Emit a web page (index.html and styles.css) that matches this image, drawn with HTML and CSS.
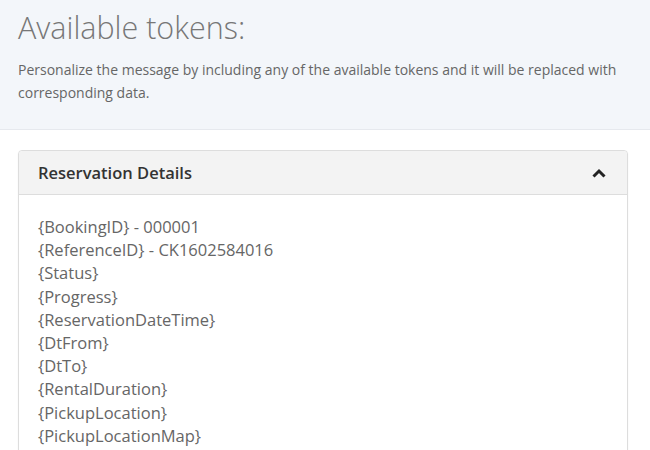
FILE: index.html
```html
<!DOCTYPE html>
<html lang="en">

<head>
  <meta charset="UTF-8" />
  <meta name="viewport" content="width=device-width, initial-scale=1.0" />
  <title>Available tokens</title>
  <link rel="stylesheet" href="styles.css">
</head>

<body>
  <div class="intro">
    <h1>Available tokens:</h1>
    <p>Personalize the message by including any of the available tokens and it will be replaced with corresponding data.</p>
  </div>

  <div class="content">
    <div class="panel">
      <div class="panel-heading">
        <h3>Reservation Details</h3>
        <svg class="chevron" width="16" height="12" viewBox="0 0 16 12">
          <path d="M2.5 9.5 L8 4 L13.5 9.5" fill="none" stroke="#222" stroke-width="3" />
        </svg>
      </div>
      <div class="panel-body">
        <div class="token">{BookingID} - 000001</div>
        <div class="token">{ReferenceID} - CK1602584016</div>
        <div class="token">{Status}</div>
        <div class="token">{Progress}</div>
        <div class="token">{ReservationDateTime}</div>
        <div class="token">{DtFrom}</div>
        <div class="token">{DtTo}</div>
        <div class="token">{RentalDuration}</div>
        <div class="token">{PickupLocation}</div>
        <div class="token">{PickupLocationMap}</div>
      </div>
    </div>
  </div>
</body>

</html>
```

FILE: styles.css
```css
body {
  margin: 0;
  font-family: "Open Sans", "Liberation Sans", sans-serif;
  background: #fff;
  color: #666;
}

.intro {
  background: #f3f6fa;
  border-bottom: 1px solid #e6e9ee;
  padding: 7px 18px 0;
  height: 122px;
  box-sizing: content-box;
}

.intro h1 {
  margin: 0;
  font-size: 30.5px;
  font-weight: 300;
  line-height: 40px;
  color: #777;
}

.intro p {
  margin: 11px 0 0;
  font-size: 14px;
  line-height: 23px;
  color: #666;
}

.content {
  padding: 20px 22px 0 18px;
}

.panel {
  border: 1px solid #ddd;
  border-radius: 4px;
  box-shadow: 0 1px 2px rgba(0, 0, 0, 0.05);
}

.panel-heading {
  display: flex;
  align-items: center;
  justify-content: space-between;
  height: 43px;
  padding: 0 20px 0 19px;
  background: #f3f3f3;
  border-bottom: 1px solid #ddd;
  border-radius: 4px 4px 0 0;
}

.panel-heading h3 {
  margin: 0;
  font-size: 16.5px;
  font-weight: 600;
  color: #333;
}

.panel-body {
  padding: 20px 19px 10px;
}

.token {
  font-size: 16.5px;
  line-height: 23.2px;
  color: #666;
}
```
